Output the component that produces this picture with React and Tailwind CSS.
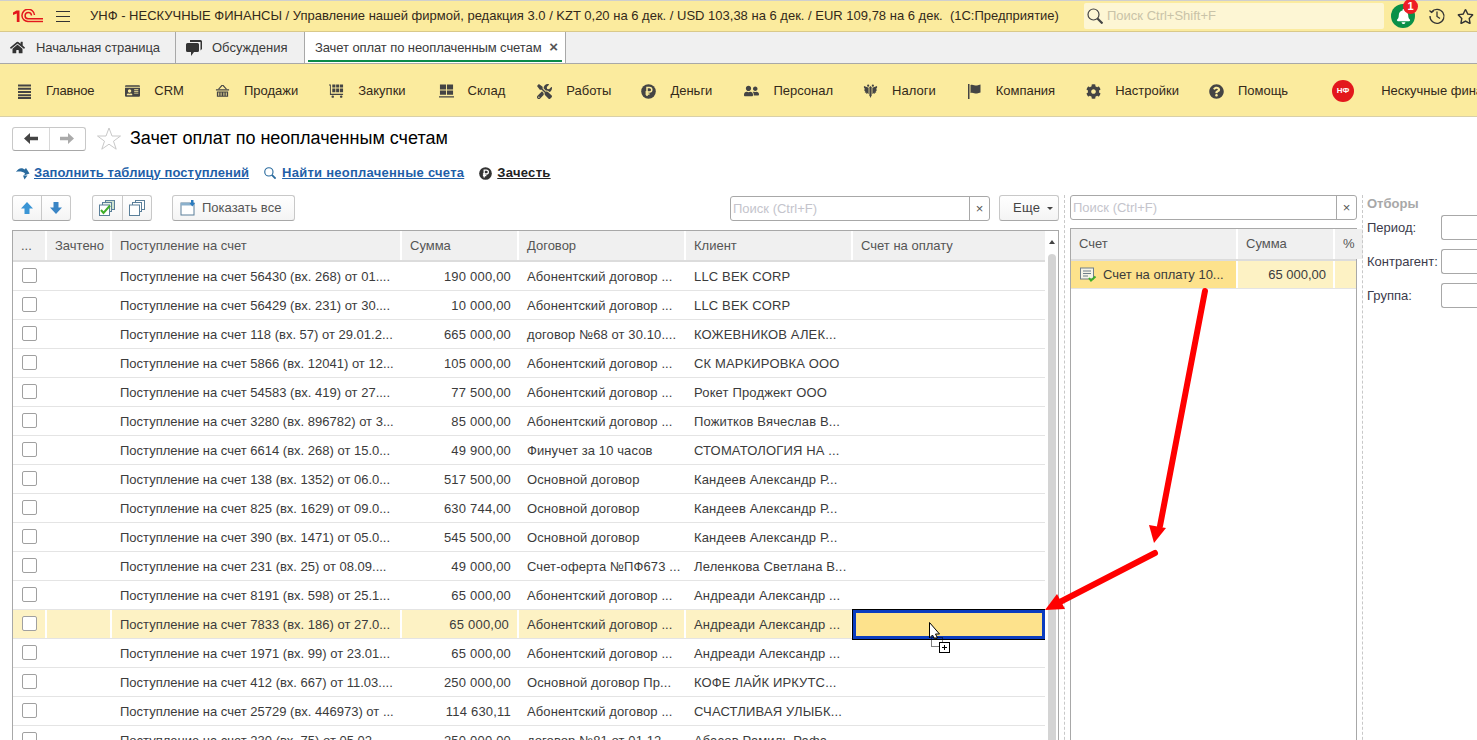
import { FaHome, FaIdCard, FaTools, FaCog, FaQuestionCircle, FaUserFriends, FaRegStar, FaBell } from "react-icons/fa";

const GRID = "bg-[#fbeb9e]";

const Basket = () => (
  <svg width="16" height="16" viewBox="0 0 16 16" fill="#444">
    <path d="M1 6h14v1.500H1zM2 8.500h12V14H2zM3.500 9.500v3.500h1V9.500zM6 9.500v3.500h1V9.500zM9 9.500v3.500h1V9.500zM11.500 9.500v3.500h1V9.500z" fillRule="evenodd" />
    <path d="M3 6l4-4.500h2L13 6h-1.500L8 2.500 4.500 6z" />
  </svg>
);
const Cart = () => (
  <svg width="16" height="16" viewBox="0 0 16 16" fill="#444">
    <path d="M0 1h2v10h13v1.200H1V2.200H0zM3.500 1h3.300v3.200H3.500zM7.600 1h3.300v3.200H7.600zM11.700 1H15v3.200h-3.300zM3.500 5.200h3.300v4H3.500zM7.600 5.200h3.300v4H7.600zM11.700 5.200H15v4h-3.300z" />
    <circle cx="4" cy="14" r="1.300" />
    <circle cx="13" cy="14" r="1.300" />
  </svg>
);
const Store = () => (
  <svg width="16" height="16" viewBox="0 0 16 16" fill="#444">
    <path d="M1 1h6.500v5.500H1zM8.500 1H15v5.500H8.500zM1 7.500h6.500V12H1zM8.500 7.500H15V12H8.500zM0 13.500h16V15H0z" />
  </svg>
);
const Lines = () => (
  <svg width="15" height="15" viewBox="0 0 15 15" fill="#444">
    <path d="M1 .5h13v2H1zM1 3.800h13v2H1zM1 7h13v2H1zM1 10.200h13v2H1zM1 13h13v2H1z" />
  </svg>
);
const Flag = () => (
  <svg width="15" height="15" viewBox="0 0 15 15" fill="#444">
    <path d="M1 0h1.500v15H1z" />
    <path d="M3.500 1C6 0 8 2 10 1.500L13.500.5v8L10 9.500C8 10 6 8 3.500 9z" />
  </svg>
);
const Ruble = ({ size = 15, bg = "#444", fg = "#fbeb9e" }) => (
  <svg width={size} height={size} viewBox="0 0 15 15">
    <circle cx="7.500" cy="7.500" r="7.300" fill={bg} />
    <path d="M6 12V3.500h2.500a2.300 2.300 0 010 4.600H4.500M4.500 10h4" fill="none" stroke={fg} strokeWidth="1.500" />
  </svg>
);
const Eagle = () => (
  <svg width="17" height="17" viewBox="0 0 16 16" fill="#444">
    <path d="M8 2l1.200 1.500V12L8 15l-1.200-3V3.500z" />
    <path d="M6 4L1 2v2l1 .5-1 1 1.200.5-1 1.200L2.500 8l-.7 1.200L3.500 9l-.3 1.500L5 9.800 6 11zM10 4l5-2v2l-1 .5 1 1-1.200.5 1 1.200-1.300.8.7 1.200L12.500 9l.3 1.500L11 9.800 10 11z" />
    <circle cx="5.500" cy="1.800" r="1.200" />
    <circle cx="10.500" cy="1.800" r="1.200" />
  </svg>
);
const Logo1C = () => (
  <svg width="30" height="15" viewBox="0 0 30 15" fill="none" stroke="#e3171c">
    <path d="M0 3.500l3.500-2H6.500V13H3.800V4.500L0 6z" fill="#e3171c" stroke="none" />
    <path d="M21.500 6A6 6 0 0 0 9 7a6 6 0 0 0 6 5.500" strokeWidth="1.500" />
    <path d="M18.500 6.500A3.200 3.200 0 1 0 15 9.800H30" strokeWidth="1.500" />
    <path d="M15 12.500H30" strokeWidth="1.400" />
  </svg>
);
const Comments = () => (
  <svg width="16" height="16" viewBox="0 0 16 16" fill="#333">
    <path d="M4 0h10.500A1.500 1.500 0 0116 1.500V9l-1.500 1.500V2H4z" />
    <path d="M1.500 3h10A1.500 1.500 0 0113 4.500v6a1.500 1.500 0 01-1.500 1.500H8l-3 4v-4H1.500A1.500 1.500 0 010 10.500v-6A1.500 1.500 0 011.500 3z" />
  </svg>
);
const History = () => (
  <svg width="18" height="18" viewBox="0 0 18 18" fill="none" stroke="#333" strokeWidth="1.300">
    <path d="M3.500 5A7 7 0 1 1 2 9" />
    <path d="M1.500 3.500l2 2 2-1.500" />
    <path d="M9 4.500V9.500l3 2" />
  </svg>
);
const Magnifier = ({ size, color, width = 1.500 }) => (
  <svg width={size} height={size} viewBox="0 0 16 16" fill="none" stroke={color} strokeWidth={width}>
    <circle cx="6.500" cy="6.500" r="5.500" />
    <path d="M10.500 10.500l5 5" strokeWidth={width + 1} />
  </svg>
);
const Fill = () => (
  <svg width="14" height="13" viewBox="0 0 14 13" fill="#2a6b9e">
    <path d="M0 5C2 1 6 0 8.500 2.500L10 1l3.500 5.500L8 8.500l1-2C7 4.500 3 4 0 5z" />
    <path d="M7 8.500h4.500L8.500 12.500z" />
  </svg>
);
const LeftArrow = ({ color }) => (
  <svg width="14" height="11" viewBox="0 0 14 11" fill={color}>
    <path d="M0 5.500L6 0v3.800h8v3.400H6V11z" />
  </svg>
);
const RightArrow = ({ color }) => (
  <svg width="14" height="11" viewBox="0 0 14 11" fill={color}>
    <path d="M14 5.500L8 0v3.800H0v3.400h8V11z" />
  </svg>
);
const UpArrow = () => (
  <svg width="12" height="12" viewBox="0 0 12 12">
    <path d="M6 0l6 6.500H8.500V12h-5V6.500H0z" fill="#3a95d5" />
  </svg>
);
const DownArrow = () => (
  <svg width="12" height="12" viewBox="0 0 12 12">
    <path d="M6 12L0 5.500h3.500V0h5v5.500H12z" fill="#3a85c5" />
  </svg>
);
const CheckAll = () => (
  <svg width="18" height="18" viewBox="0 0 18 18" fill="none">
    <rect x="7.500" y="1.500" width="9" height="9" fill="#cfe3cf" stroke="#5a7f9a" />
    <rect x="4.500" y="3.500" width="9" height="9" fill="#e6f0e6" stroke="#5a7f9a" />
    <rect x="1.500" y="6" width="10" height="10.500" fill="#fff" stroke="#5a7f9a" />
    <path d="M3 11l2.500 3L12 6.500" stroke="#3fae2a" strokeWidth="2" />
  </svg>
);
const UncheckAll = () => (
  <svg width="18" height="18" viewBox="0 0 18 18" fill="#fff" stroke="#5a7f9a">
    <rect x="7.500" y="1.500" width="9" height="9" />
    <rect x="4.500" y="3.500" width="9" height="9" />
    <rect x="1.500" y="6" width="10" height="10.500" />
  </svg>
);
const ShowAll = () => (
  <svg width="16" height="16" viewBox="0 0 16 16" fill="none">
    <rect x="1" y="3" width="13" height="12" fill="#fff" stroke="#5a7f9a" />
    <path d="M1 3h13v2.500H1z" fill="#8ab0cc" />
    <path d="M11 0h2.500v3H15l-2.700 3.500L9.500 3H11z" fill="#2a7bbf" />
  </svg>
);
const InvoiceIcon = () => (
  <svg width="18" height="15" viewBox="0 0 18 15" fill="none">
    <rect x="0.500" y="1" width="13" height="11" fill="#f4f4e8" stroke="#6f7f8a" />
    <path d="M3 4h8M3 6.500h8M3 9h5" stroke="#6f7f8a" />
    <path d="M9 11l2 2.500 4.500-4" stroke="#3fae2a" strokeWidth="2" />
  </svg>
);
const StarOutline = () => (
  <svg width="24" height="23" viewBox="0 0 24 23" fill="#fff" stroke="#c8c8c8">
    <path d="M12 1l3 8h8.500l-7 5.200 2.700 8-7.200-5-7.200 5 2.700-8-7-5.200H9z" />
  </svg>
);

// extra holds the small per-item nudges so the labels land where the reference has them
const menu = [
  { label: "Главное", icon: <Lines />, extra: "tracking-[-0.2px]" },
  { label: "CRM", icon: <FaIdCard size={16} color="#444" />, extra: "" },
  { label: "Продажи", icon: <Basket />, extra: "" },
  { label: "Закупки", icon: <Cart />, extra: "mr-[2px]" },
  { label: "Склад", icon: <Store />, extra: "mr-[1px]" },
  { label: "Работы", icon: <FaTools size={15} color="#444" />, extra: "-mr-[1px]" },
  { label: "Деньги", icon: <Ruble />, extra: "mr-[1px]" },
  { label: "Персонал", icon: <FaUserFriends size={18} color="#444" />, extra: "-mr-[1px]" },
  { label: "Налоги", icon: <Eagle />, extra: "" },
  { label: "Компания", icon: <Flag />, extra: "" },
  { label: "Настройки", icon: <FaCog size={15} color="#444" />, extra: "-mr-[1px]" },
  { label: "Помощь", icon: <FaQuestionCircle size={15} color="#444" />, extra: "" },
];

const rows = [
  ["Поступление на счет 56430 (вх. 268) от 01....", "190 000,00", "Абонентский договор ...", "LLC BEK CORP"],
  ["Поступление на счет 56429 (вх. 231) от 30....", "10 000,00", "Абонентский договор ...", "LLC BEK CORP"],
  ["Поступление на счет 118 (вх. 57) от 29.01.2...", "665 000,00", "договор №68 от 30.10....", "КОЖЕВНИКОВ АЛЕК..."],
  ["Поступление на счет 5866 (вх. 12041) от 12...", "105 000,00", "Абонентский договор ...", "СК МАРКИРОВКА ООО"],
  ["Поступление на счет 54583 (вх. 419) от 27....", "77 500,00", "Абонентский договор ...", "Рокет Проджект ООО"],
  ["Поступление на счет 3280 (вх. 896782) от 3...", "85 000,00", "Абонентский договор ...", "Пожитков Вячеслав В..."],
  ["Поступление на счет 6614 (вх. 268) от 15.0...", "49 900,00", "Финучет за 10 часов", "СТОМАТОЛОГИЯ НА ..."],
  ["Поступление на счет 138 (вх. 1352) от 06.0...", "517 500,00", "Основной договор", "Кандеев Александр Р..."],
  ["Поступление на счет 825 (вх. 1629) от 09.0...", "630 744,00", "Основной договор", "Кандеев Александр Р..."],
  ["Поступление на счет 390 (вх. 1471) от 05.0...", "545 500,00", "Основной договор", "Кандеев Александр Р..."],
  ["Поступление на счет 231 (вх. 25) от 08.09....", "49 000,00", "Счет-оферта №ПФ673 ...", "Леленкова Светлана В..."],
  ["Поступление на счет 8191 (вх. 598) от 25.1...", "65 000,00", "Абонентский договор ...", "Андреади Александр ..."],
  ["Поступление на счет 7833 (вх. 186) от 27.0...", "65 000,00", "Абонентский договор ...", "Андреади Александр ..."],
  ["Поступление на счет 1971 (вх. 99) от 23.01...", "65 000,00", "Абонентский договор ...", "Андреади Александр ..."],
  ["Поступление на счет 412 (вх. 667) от 11.03....", "250 000,00", "Основной договор Пр...", "КОФЕ ЛАЙК ИРКУТС..."],
  ["Поступление на счет 25729 (вх. 446973) от ...", "114 630,11", "Абонентский договор ...", "СЧАСТЛИВАЯ УЛЫБК..."],
  ["Поступление на счет 230 (вх. 75) от 05.02....", "250 000,00", "договор №81 от 01.12....", "Абасов Рамиль Рафа..."],
];

function SearchBox({ width }) {
  return (
    <div className={`${width} h-[25px] flex border border-[#a8a8a8] rounded-[3px] bg-white`}>
      <div className="flex-1 px-[2px] leading-[23px] text-[#c4c4cc]">Поиск (Ctrl+F)</div>
      <div className="w-[20px] border-l border-[#a8a8a8] text-center leading-[23px] text-[#555]">×</div>
    </div>
  );
}

function ToolBtn({ children, className }) {
  return (
    <div className={`h-[26px] flex items-center bg-gradient-to-b from-white to-[#f4f4f4] border border-[#c8c8c8] border-b-[#a8a8a8] rounded-[3px] ${className}`}>
      {children}
    </div>
  );
}

function HeadCell({ width, children }) {
  return <div className={`${width} shrink-0 h-full flex items-center px-[8px] bg-[#f0f0f0] border-r-2 border-white text-[#555]`}>{children}</div>;
}

function Row({ row, selected }) {
  const cell = selected ? "bg-[#fdf2c4] border-r-2 border-white" : "";
  return (
    <div className="h-[29px] flex border-b border-[#e4e4e4] text-[#3b3b3b]">
      <div className={`w-[34px] shrink-0 flex items-center pl-[9px] ${cell}`}>
        <div className="w-[15px] h-[15px] bg-white border border-[#a0a0a0] rounded-[2px] -mt-[1px]" />
      </div>
      <div className={`w-[65px] shrink-0 ${cell}`} />
      <div className={`w-[290px] shrink-0 px-[8px] leading-[30px] whitespace-nowrap overflow-hidden ${cell}`}>{row[0]}</div>
      <div className={`w-[117px] shrink-0 px-[8px] leading-[30px] text-right tracking-[0.2px] ${cell}`}>{row[1]}</div>
      <div className={`w-[167px] shrink-0 px-[8px] leading-[30px] whitespace-nowrap overflow-hidden tracking-[0.1px] ${cell}`}>{row[2]}</div>
      <div className={`w-[167px] shrink-0 px-[8px] leading-[30px] whitespace-nowrap overflow-hidden tracking-[0.15px] ${cell}`}>{row[3]}</div>
      {selected ? (
        <div className="flex-1 h-[29px] bg-[#fde28c] border-[3px] border-[#0a3cc0] outline outline-1 outline-black" />
      ) : (
        <div className="flex-1" />
      )}
    </div>
  );
}

export default function App() {
  return (
    <div className="relative w-[1477px] h-[740px] overflow-hidden bg-white text-[13px] font-['Liberation_Sans',Arial,sans-serif]">
      {/* top bar */}
      <div className={`h-[32px] ${GRID} border-t border-[#cfcfcf] border-b border-b-[#d9c98a] flex items-center text-[#33291a]`}>
        <div className="w-[56px] pl-[13px] shrink-0"><Logo1C /></div>
        <div className="w-[34px] shrink-0 flex flex-col gap-[4px]">
          <div className="w-[14px] h-[1px] bg-[#333]" />
          <div className="w-[14px] h-[1px] bg-[#333]" />
          <div className="w-[14px] h-[1px] bg-[#333]" />
        </div>
        <div className="w-[994px] shrink-0 whitespace-pre">УНФ - НЕСКУЧНЫЕ ФИНАНСЫ / Управление нашей фирмой, редакция 3.0 / KZT 0,20 на 6 дек. / USD 103,38 на 6 дек. / EUR 109,78 на 6 дек.  (1С:Предприятие)</div>
        <div className="w-[300px] h-[26px] shrink-0 bg-[#fdf6d4] rounded-[2px] flex items-center pl-[3px] gap-[4px] text-[#c9c3a8]">
          <Magnifier size={16} color="#444" width={1.2} />
          <span>Поиск Ctrl+Shift+F</span>
        </div>
        <div className="relative ml-[7px] w-[24px] h-[24px] rounded-full bg-[#0a9048] flex items-center justify-center">
          <FaBell size={15} color="#fff" />
          <div className="absolute -top-[5px] -right-[3px] w-[15px] h-[15px] rounded-full bg-[#ee1c25] text-white text-[11px] font-bold text-center leading-[15px]">1</div>
        </div>
        <div className="ml-[13px]"><History /></div>
        <div className="ml-[11px]"><FaRegStar size={17} color="#333" /></div>
      </div>

      {/* tabs */}
      <div className="h-[32px] bg-[#f0f0f0] border-b border-[#a8a8a8] flex text-[#3b3b3b]">
        <div className="w-[176px] flex items-center pl-[10px] gap-[11px] border-r border-[#a8a8a8] tracking-[-0.1px]"><FaHome size={15} color="#333" /><span>Начальная страница</span></div>
        <div className="w-[129px] flex items-center pl-[10px] gap-[10px] border-r border-[#a8a8a8]"><Comments /><span>Обсуждения</span></div>
        <div className="w-[261px] bg-white border-r border-[#a8a8a8] flex items-center pl-[10px] pr-[7px] justify-between relative">
          <span className="tracking-[-0.09px]">Зачет оплат по неоплаченным счетам</span>
          <span className="text-[15px] font-bold text-[#555]">×</span>
          <div className="absolute left-[3px] right-[3px] bottom-[1px] h-[2px] bg-[#0a8a48]" />
        </div>
      </div>

      {/* sections */}
      <div className={`h-[53px] ${GRID} border-b border-[#d9d0a8] flex items-center pt-[2px] pl-[17px] gap-[31px] whitespace-nowrap text-[#33291a] overflow-hidden`}>
        {menu.map((m) => (
          <div key={m.label} className={`flex items-center gap-[14px] ${m.extra}`}>
            <div className="w-[15px] flex justify-center">{m.icon}</div>
            <span>{m.label}</span>
          </div>
        ))}
        <div className="flex items-center gap-[27px] ml-[13px]">
          <div className="w-[22px] h-[22px] rounded-full bg-[#e3171c] text-white text-[8px] font-bold text-center leading-[22px]">НФ</div>
          <span>Нескучные финансы</span>
        </div>
      </div>

      {/* page title */}
      <div className="flex items-center pl-[12px] pt-[9px] h-[34px]">
        <div className="w-[74px] h-[24px] flex border border-[#c8c8c8] border-b-[#a8a8a8] rounded-[3px]">
          <div className="flex-1 flex items-center justify-center border-r border-[#d8d8d8]"><LeftArrow color="#444" /></div>
          <div className="flex-1 flex items-center justify-center"><RightArrow color="#aaa" /></div>
        </div>
        <div className="ml-[11px]"><StarOutline /></div>
        <h1 className="ml-[9px] text-[18px] text-black">Зачет оплат по неоплаченным счетам</h1>
      </div>

      {/* commands */}
      <div className="flex items-center pl-[16px] h-[20px] mt-[12px] font-bold tracking-[0.07px]">
        <Fill />
        <span className="ml-[4px] text-[#1f5fa8] underline">Заполнить таблицу поступлений</span>
        <span className="ml-[15px]"><Magnifier size={12} color="#2a6b9e" /></span>
        <span className="ml-[6px] text-[#1f5fa8] underline tracking-[0.25px]">Найти неоплаченные счета</span>
        <span className="ml-[15px]"><Ruble size={13} bg="#333" fg="#fff" /></span>
        <span className="ml-[5px] text-[#222] underline tracking-[0.3px]">Зачесть</span>
      </div>

      {/* main */}
      <div className="flex pl-[12px] mt-[12px]">
        <div className="w-[1047px] shrink-0">
          <div className="flex items-start h-[35px]">
            <ToolBtn className="w-[59px]">
              <div className="flex-1 h-full flex items-center justify-center border-r border-[#c8c8c8]"><UpArrow /></div>
              <div className="flex-1 h-full flex items-center justify-center"><DownArrow /></div>
            </ToolBtn>
            <ToolBtn className="ml-[21px] w-[60px]">
              <div className="flex-1 h-full flex items-center justify-center border-r border-[#c8c8c8]"><CheckAll /></div>
              <div className="flex-1 h-full flex items-center justify-center"><UncheckAll /></div>
            </ToolBtn>
            <ToolBtn className="ml-[20px] w-[123px] pl-[7px] gap-[6px] text-[#555]"><ShowAll /><span>Показать все</span></ToolBtn>
            <div className="ml-[435px] mt-[1px]"><SearchBox width="w-[260px]" /></div>
            <ToolBtn className="ml-[9px] w-[60px] pl-[13px] gap-[7px] text-[#444] tracking-[0.3px]"><span>Еще</span><span className="w-0 h-0 border-x-[3px] border-x-transparent border-t-[3px] border-t-[#444]" /></ToolBtn>
          </div>

          <div className="relative border border-[#a8a8a8] h-[600px] overflow-hidden">
            <div className="h-[31px] flex border-b-2 border-[#dcdcdc] mr-[13px]">
              <HeadCell width="w-[34px]">...</HeadCell>
              <HeadCell width="w-[65px]">Зачтено</HeadCell>
              <HeadCell width="w-[290px]">Поступление на счет</HeadCell>
              <HeadCell width="w-[117px]">Сумма</HeadCell>
              <HeadCell width="w-[167px]">Договор</HeadCell>
              <HeadCell width="w-[167px]">Клиент</HeadCell>
              <div className="flex-1 h-full flex items-center px-[8px] bg-[#f0f0f0] text-[#555]">Счет на оплату</div>
            </div>
            <div className="mr-[13px]">
              {rows.map((r, i) => <Row key={r[0]} row={r} selected={i === 12} />)}
            </div>
            {/* scrollbar */}
            <div className="absolute right-0 top-0 bottom-0 w-[13px] bg-white">
              <div className="mx-auto mt-[9px] w-0 h-0 border-x-[3px] border-x-transparent border-b-[4px] border-b-[#444]" />
              <div className="mx-auto mt-[10px] w-[8px] h-[600px] rounded-[4px] bg-[#d4d4d4]" />
            </div>
          </div>
        </div>

        <div className="w-[11px] shrink-0 flex justify-center"><div className="h-[600px] border-l border-dashed border-[#c8c8c8]" /></div>

        <div className="w-[287px] shrink-0">
          <div className="h-[33px]"><SearchBox width="w-[287px]" /></div>
          <div className="border border-[#a8a8a8] h-[600px]">
            <div className="h-[32px] flex border-b-2 border-[#dcdcdc]">
              <HeadCell width="w-[167px]">Счет</HeadCell>
              <HeadCell width="w-[97px]">Сумма</HeadCell>
              <div className="flex-1 flex items-center px-[8px] bg-[#f0f0f0] text-[#555]">%</div>
            </div>
            <div className="h-[28px] flex border-b border-[#e4e4e4] text-[#3b3b3b]">
              <div className="w-[167px] shrink-0 flex items-center pl-[9px] gap-[5px] bg-[#fde28c] border-r-2 border-white"><InvoiceIcon /><span className="whitespace-nowrap">Счет на оплату 10...</span></div>
              <div className="w-[97px] shrink-0 px-[7px] leading-[27px] text-right bg-[#fdf2c4] border-r-2 border-white">65 000,00</div>
              <div className="flex-1 bg-[#fdf2c4]" />
            </div>
          </div>
        </div>

        <div className="w-[10px] shrink-0 flex justify-center"><div className="h-[600px] border-l border-dashed border-[#c8c8c8]" /></div>

        <div className="flex-1 text-[#3b3b4b]">
          <div className="font-bold text-[#a8a8a8] mt-[1px] leading-[15px]">Отборы</div>
          <div className="mt-[4px] flex flex-col gap-[9px]">
            {["Период:", "Контрагент:", "Группа:"].map((l) => (
              <div key={l} className="h-[25px] flex items-center">
                <span className="w-[74px] shrink-0">{l}</span>
                <div className="flex-1 h-[25px] border border-[#a8a8a8] rounded-l-[3px] border-r-0" />
              </div>
            ))}
          </div>
        </div>
      </div>

      {/* arrows and drag cursor drawn over the screenshot */}
      <svg className="absolute left-0 top-0 pointer-events-none" width="1477" height="740">
        <path d="M1205 291L1160 526" stroke="#ff0000" strokeWidth="6" strokeLinecap="round" />
        <path d="M1154 543L1149 525L1166 528Z" fill="#ff0000" />
        <path d="M1155 553L1058 603" stroke="#ff0000" strokeWidth="6" strokeLinecap="round" />
        <path d="M1045 610L1057 594L1065 609Z" fill="#ff0000" />
        <path d="M929.500 622.500V638l3-3 2 4 3-1-2-4h4z" fill="#fff" stroke="#000" />
        <rect x="931.500" y="637.500" width="11" height="9" fill="none" stroke="#000" strokeDasharray="1 1" />
        <rect x="939.500" y="642.500" width="10" height="10" fill="#fff" stroke="#000" />
        <path d="M942 647.500h5M944.500 645v5" stroke="#000" />
      </svg>
    </div>
  );
}
